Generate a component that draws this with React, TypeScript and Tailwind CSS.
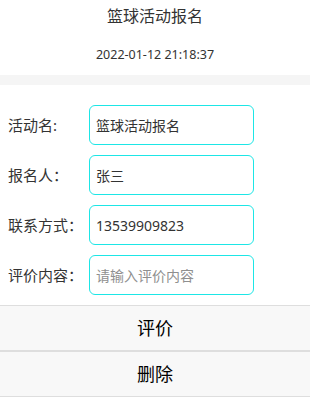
import React from "react";

const fields = [
  { label: "活动名:", value: "篮球活动报名" },
  { label: "报名人：", value: "张三" },
  { label: "联系方式：", value: "13539909823" },
  { label: "评价内容：", value: "", placeholder: "请输入评价内容" },
];

const App = () => {
  return (
    <div className="w-[310px] min-h-[420px] bg-white text-[#333] font-['Noto_Sans','Noto_Sans_CJK_SC',sans-serif]">
      <h1 className="h-[30px] pt-[1px] flex items-center justify-center text-[16px]">篮球活动报名</h1>
      <p className="h-[45px] pt-[6px] flex items-center justify-center text-[12.5px]">2022-01-12 21:18:37</p>
      <div className="h-[10px] bg-[#f5f5f5]" />

      {/* form */}
      <div className="flex flex-col gap-[10px] pt-[20px]">
        {fields.map((f) => (
          <div key={f.label} className="flex items-center h-[40px]">
            <label className="w-[89px] pl-[8px] text-[15px] whitespace-nowrap">{f.label}</label>
            <input
              className="w-[165px] h-[40px] border border-[#1de6e6] rounded-[6px] px-[6px] text-[14px] text-[#333] outline-none placeholder:text-[#8f8f8f]"
              defaultValue={f.value}
              placeholder={f.placeholder}
            />
          </div>
        ))}
      </div>

      {/* actions */}
      <div className="mt-[10px] flex flex-col">
        <button className="h-[46px] bg-[#f8f8f8] border-t border-b border-[#dedede] text-[18px] text-black">评价</button>
        <button className="h-[46px] bg-[#f8f8f8] border-t border-b border-[#dedede] text-[18px] text-black">删除</button>
      </div>
    </div>
  );
};

export default App;
